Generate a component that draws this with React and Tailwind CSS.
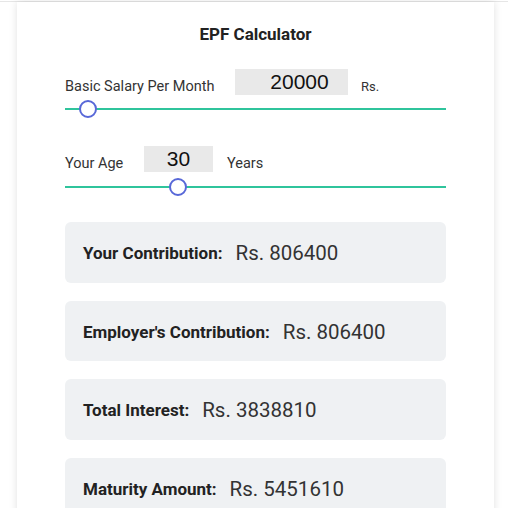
import React from "react"

function Slider({ left }) {
    return (
        <div className="relative h-[18px] flex items-center">
            <div className="w-full h-[1.5px] bg-[#2fc49c]" />
            <div
                className="absolute top-0 w-[18px] h-[18px] rounded-full border-2 border-[#5868d8] bg-white"
                style={{ left: left - 9 }}
            />
        </div>
    )
}

function ResultCard({ label, value }) {
    return (
        <div className="h-[60.5px] rounded-md bg-[#eff1f3] flex items-center pl-[18px] pt-[3px]">
            <span className="text-[17px] font-bold text-[#222]">{label}</span>
            <span className="ml-[13px] text-[20.5px] text-[#333]">{value}</span>
        </div>
    )
}

export default function App() {
    return (
        <div className="min-h-screen bg-white font-['Roboto',sans-serif] overflow-hidden">
            <div className="h-px mt-px bg-[#e6e6e6]" />
            <div className="ml-[17px] w-[477px] min-h-[520px] bg-white shadow-[0_0_8px_rgba(0,0,0,0.12)] px-[48px] pb-8">
                <h1 className="pt-[20px] text-center text-[17px] leading-6 font-bold text-[#222]">EPF Calculator</h1>

                <div className="mt-[23px] flex items-end">
                    <span className="w-[170px] text-[14.5px] text-[#333] leading-[17px]">Basic Salary Per Month</span>
                    <div className="w-[113px] h-[26px] bg-[#e9e9e9] text-[21px] text-[#111] font-['Liberation_Sans',sans-serif] leading-[26px] text-center pl-4">20000</div>
                    <span className="ml-[13px] text-[13px] text-[#333] leading-[17px]">Rs.</span>
                </div>
                <div className="mt-[5px]">
                    <Slider left={23} />
                </div>

                <div className="mt-[28px] flex items-end">
                    <span className="w-[79px] text-[14.5px] text-[#333] leading-[17px]">Your Age</span>
                    <div className="w-[69px] h-[26px] bg-[#e9e9e9] text-[21px] text-[#111] font-['Liberation_Sans',sans-serif] leading-[26px] text-center">30</div>
                    <span className="ml-[14px] text-[14.5px] text-[#333] leading-[17px]">Years</span>
                </div>
                <div className="mt-[6px]">
                    <Slider left={113} />
                </div>

                <div className="mt-[26px] flex flex-col gap-[18px]">
                    <ResultCard label="Your Contribution:" value="Rs. 806400" />
                    <ResultCard label="Employer's Contribution:" value="Rs. 806400" />
                    <ResultCard label="Total Interest:" value="Rs. 3838810" />
                    <ResultCard label="Maturity Amount:" value="Rs. 5451610" />
                </div>
            </div>
        </div>
    )
}
